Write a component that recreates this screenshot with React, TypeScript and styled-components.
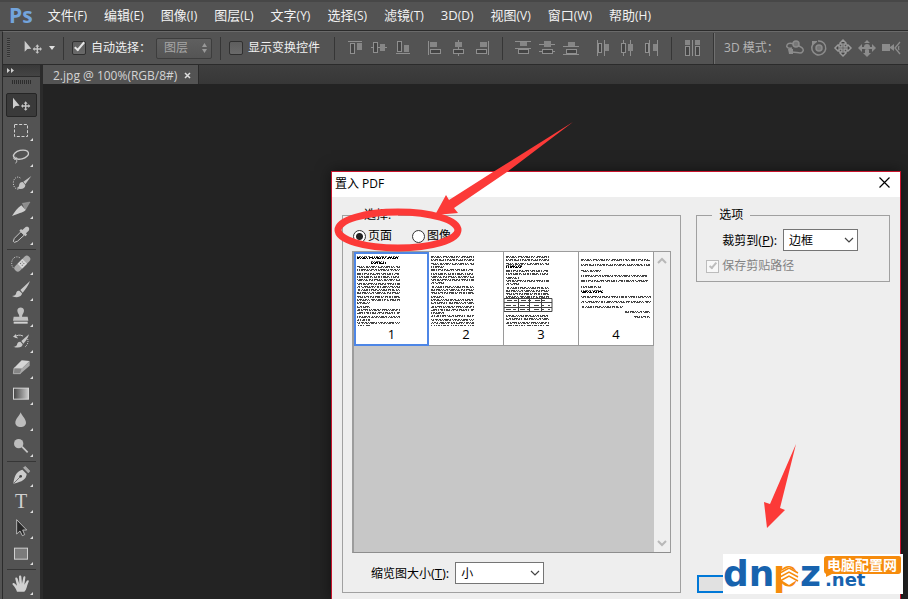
import React from 'react';
import styled, { createGlobalStyle, css } from 'styled-components';

const GlobalStyle = createGlobalStyle`
  *, *::before, *::after { box-sizing: border-box; }
  html, body { margin: 0; padding: 0; overflow: hidden; }
  body, button, input, select {
    font-family: "Open Sans", "Noto Sans CJK SC", sans-serif;
    font-size: 12px;
    line-height: 16px;
  }
  button, select, input { margin: 0; padding: 0; }
  button { border: 0; background: none; color: inherit; display: block; }
`;

const Shell = styled.div`
  position: relative;
  height: 100vh;
  display: flex;
  flex-direction: column;
  overflow: hidden;
  background: #535353;
  color: #e8e8e8;
`;

/* ---------- menu bar ---------- */

const MenuBar = styled.nav`
  display: flex;
  align-items: center;
  flex: none;
  height: 31px;
  padding: 0 0 2px 9px;
  gap: 15px;
  border-top: 2px solid #474747;
  border-bottom: 1px solid #2b2b2b;
  white-space: nowrap;
`;

const Logo = styled.span`
  font-size: 21px;
  line-height: 26px;
  font-weight: 700;
  font-family: "Open Sans", sans-serif;
  color: #73a4dc;
`;

const MenuList = styled.div`
  display: flex;
  gap: 17px;
`;

const MenuItem = styled.button`
  font-size: 13px;
  color: #f2f2f2;
  small { font-size: 12px; }
`;

/* ---------- options bar ---------- */

const OptionsBar = styled.div`
  display: flex;
  align-items: center;
  flex: none;
  height: 34px;
  margin-left: 2px;
  border-left: 1px solid #2b2b2b;
  border-top: 1px solid #6a6a6a;
  border-bottom: 1px solid #2b2b2b;
  white-space: nowrap;
  overflow: hidden;
`;

const Grip = styled.span<{ $wide?: boolean }>`
  flex: none;
  ${p => p.$wide
    ? css`width: 20px; height: 4px; margin: 3px auto 9px;
        background: repeating-linear-gradient(90deg, #2c2c2c 0 1px, #535353 1px 2px);`
    : css`width: 3px; height: 20px; margin-left: 4px;
        background: repeating-linear-gradient(180deg, #333 0 1px, #5b5b5b 1px 2px);`}
`;

const CurrentTool = styled.button`
  display: flex;
  align-items: center;
  margin-left: 14px;
  gap: 6px;
`;

const Divider = styled.span<{ $tall?: boolean }>`
  flex: none;
  width: ${p => (p.$tall ? 2 : 1)}px;
  height: ${p => (p.$tall ? 31 : 23)}px;
  background: #363636;
  border-right: ${p => (p.$tall ? '1px solid #707070' : '0')};
  margin: ${p => (p.$tall ? '0 9px' : '0 8px')};
`;

const CheckLabel = styled.label<{ $muted?: boolean }>`
  display: flex;
  align-items: center;
  gap: 5px;
  color: ${p => (p.$muted ? '#838383' : '#f0f0f0')};
`;

const DarkCheck = styled.input`
  appearance: none;
  position: relative;
  width: 14px;
  height: 14px;
  border: 1px solid #303030;
  border-radius: 2px;
  background: linear-gradient(#5e5e5e, #6a6a6a);
  &:checked::after {
    content: "";
    position: absolute;
    left: 4px;
    top: -2px;
    width: 5px;
    height: 11px;
    border: solid #e6e6e6;
    border-width: 0 2px 2px 0;
    transform: rotate(40deg);
  }
`;

const LayerPicker = styled.div`
  display: grid;
  align-items: center;
  width: 56px;
  height: 21px;
  margin-left: 5px;
  svg { grid-area: 1 / 1; justify-self: end; margin-right: 4px; pointer-events: none; }
`;

const LayerSelect = styled.select`
  grid-area: 1 / 1;
  appearance: none;
  height: 21px;
  padding-left: 7px;
  border: 1px solid #3d3d3d;
  border-radius: 2px;
  background: linear-gradient(#5f5f5f, #555);
  color: #a6a6a6;
  opacity: 1;
`;

const IconGroup = styled.div<{ $gap?: number }>`
  display: flex;
  flex: none;
  margin-left: ${p => p.$gap ?? 0}px;
`;

const IconButton = styled.button`
  width: 24px;
  height: 24px;
  svg { display: block; }
`;

const ModeLabel = styled.span`
  color: #b4b4b4;
  margin-right: 4px;
`;

/* ---------- tool panel and workspace ---------- */

const Main = styled.div`
  display: flex;
  flex: 1;
  min-height: 0;
`;

const ToolPanel = styled.aside`
  display: flex;
  flex-direction: column;
  flex: none;
  width: 41px;
  margin-left: 2px;
  border-left: 1px solid #2b2b2b;
  border-right: 3px solid #2b2b2b;
  background: #535353;
`;

const Collapse = styled.button`
  flex: none;
  height: 12px;
  padding-left: 3px;
  background: linear-gradient(#393939, #444);
  border-bottom: 1px solid #2b2b2b;
  svg { display: block; }
`;

const ToolButton = styled.button<{ $active?: boolean }>`
  flex: none;
  width: 36px;
  height: 26px;
  svg { display: block; }
  ${p => p.$active && css`
    width: 31px;
    height: 24px;
    margin-left: 3px;
    border: 1px solid #252525;
    border-radius: 2px;
    background: #3a3a3a;
  `}
`;

const ToolRule = styled.hr`
  flex: none;
  height: 1px;
  width: 29px;
  margin: 2px 4px 1px;
  border: 0;
  background: #363636;
`;

const Workspace = styled.main`
  display: flex;
  flex-direction: column;
  flex: 1;
  min-width: 0;
  background: #232323;
`;

const TabStrip = styled.div`
  display: flex;
  flex: none;
  height: 19px;
  background: linear-gradient(#3f3f3f, #373737);
`;

const Tab = styled.div`
  display: flex;
  align-items: center;
  gap: 7px;
  padding: 2px 6px 0 10px;
  background: #535353;
  border-right: 1px solid #2a2a2a;
  color: #d4d4d4;
`;

/* ---------- dialog ---------- */

const Dialog = styled.section`
  position: absolute;
  left: 331px;
  right: 7px;
  top: 171px;
  bottom: 0;
  display: flex;
  flex-direction: column;
  border: 1px solid #c8142c;
  border-bottom: 0;
  background: #eee;
  color: #000;
  box-shadow: 0 0 14px rgba(0, 0, 0, 0.5);
`;

const TitleBar = styled.header`
  display: flex;
  align-items: center;
  justify-content: space-between;
  flex: none;
  height: 25px;
  padding: 0 10px 1px 3px;
  background: #fff;
`;

const Title = styled.h1`
  margin: 0;
  font-size: 12px;
  font-weight: 400;
`;

const DialogBody = styled.div`
  flex: 1;
  min-height: 0;
  display: grid;
  grid-template-columns: minmax(0, 7fr) minmax(0, 4fr);
  gap: 15px;
  padding: 10px 10px 6px;
`;

const Group = styled.fieldset<{ $fill?: boolean }>`
  display: flex;
  flex-direction: column;
  min-width: 0;
  margin: 0;
  border: 1px solid #a0a0a0;
  padding: ${p => (p.$fill ? '5px 9px 8px' : '6px 9px 7px')};
`;

const Legend = styled.legend<{ $indent: number }>`
  height: 16px;
  margin-left: ${p => p.$indent}px;
  padding: 0 7px;
`;

const RadioRow = styled.div`
  display: flex;
  gap: 20px;
  padding-left: 1px;
  padding-bottom: 7px;
`;

const RadioLabel = styled.label`
  display: flex;
  align-items: center;
  gap: 2px;
`;

const Radio = styled.input`
  appearance: none;
  width: 13px;
  height: 13px;
  border: 1px solid #333;
  border-radius: 50%;
  background: #fff;
  &:checked { background: radial-gradient(circle, #222 0 3px, #fff 4px); }
`;

const PageList = styled.div`
  flex: 1;
  min-height: 0;
  display: flex;
  justify-content: space-between;
  border: 1px solid #9c9c9c;
  border-left-width: 2px;
  border-bottom-color: #8d8d8d;
  background: #c7c7c7;
`;

const Pages = styled.div`
  display: flex;
  align-items: flex-start;
`;

const PageButton = styled.button<{ $selected?: boolean }>`
  display: flex;
  flex-direction: column;
  align-items: center;
  width: 75px;
  height: 94px;
  padding-bottom: 4px;
  background: #fff;
  border-right: 1px solid #9a9a9a;
  border-bottom: 1px solid #9a9a9a;
  font-size: 13px;
  svg { flex: none; display: block; }
  ${p => p.$selected && css`
    border: 0;
    box-shadow: inset 0 0 0 2px #4d86e6;
  `}
`;

const ScrollTrack = styled.div`
  display: flex;
  flex-direction: column;
  justify-content: space-between;
  width: 16px;
  background: #efefef;
`;

const ScrollButton = styled.button`
  display: grid;
  place-items: center;
  height: 18px;
`;

const FieldRow = styled.div<{ $indent: number; $top?: number }>`
  display: flex;
  align-items: center;
  gap: 6px;
  padding-left: ${p => p.$indent}px;
  padding-top: ${p => p.$top ?? 0}px;
  span { font-size: 13px; }
`;

const SelectBox = styled.div<{ $width: number }>`
  display: grid;
  align-items: center;
  width: ${p => p.$width}px;
  svg { grid-area: 1 / 1; justify-self: end; margin-right: 4px; pointer-events: none; }
  select {
    grid-area: 1 / 1;
    appearance: none;
    height: 22px;
    padding: 1px 0 0 5px;
    border: 1px solid #757575;
    border-radius: 0;
    background: #fff;
    color: #000;
  }
`;

const LightCheck = styled(DarkCheck)`
  width: 13px;
  height: 13px;
  border: 1px solid #bcbcbc;
  border-radius: 0;
  background: #f8f8f8;
  &:checked::after {
    left: 4px;
    top: 0;
    width: 4px;
    height: 8px;
    border-color: #bdbdbd;
  }
`;

const SideColumn = styled.div`
  display: flex;
  flex-direction: column;
  justify-content: space-between;
`;

const ClipRow = styled(CheckLabel)`
  gap: 3px;
  margin-top: 7px;
`;

const OkButton = styled.button`
  height: 18px;
  margin-left: 1px;
  border: 2px solid #0078d7;
  background: #e1e1e1;
`;

/* ---------- overlays ---------- */

const Marks = styled.svg`
  position: absolute;
  left: 0;
  top: 0;
  pointer-events: none;
`;

const SiteBadge = styled.div`
  position: absolute;
  right: 5px;
  bottom: 5px;
  background: #fff;
  svg { display: block; }
`;

/* ---------- option bar drawings ---------- */

type Box = [number, number, number, number];

const AlignIcon = ({ lines, solid, hollow }: { lines: Box[]; solid: Box[]; hollow: Box[] }) => (
  <svg width="24" height="24" viewBox="0 0 24 24" shapeRendering="crispEdges">
    {lines.map(([x, y, w, h], i) => <rect key={'l' + i} x={x} y={y} width={w} height={h} fill="#8f8f8f" />)}
    {solid.map(([x, y, w, h], i) => <rect key={'s' + i} x={x} y={y} width={w} height={h} fill="#868686" />)}
    {hollow.map(([x, y, w, h], i) => (
      <rect key={'h' + i} x={x + 0.5} y={y + 0.5} width={w - 1} height={h - 1} fill="#444" stroke="#8f8f8f" />
    ))}
  </svg>
);

const alignGroups: { gap: number; icons: { name: string; lines: Box[]; solid: Box[]; hollow: Box[] }[] }[] = [
  { gap: 0, icons: [
    { name: '顶对齐', lines: [[5, 5, 14, 1]], solid: [[14, 7, 5, 7]], hollow: [[7, 7, 5, 11]] },
    { name: '垂直居中对齐', lines: [[4, 11, 16, 1]], solid: [[13, 8, 5, 7]], hollow: [[6, 6, 5, 11]] },
    { name: '底对齐', lines: [[5, 17, 14, 1]], solid: [[13, 9, 5, 7]], hollow: [[6, 5, 5, 11]] },
  ] },
  { gap: 7, icons: [
    { name: '左对齐', lines: [[6, 5, 1, 14]], solid: [[8, 6, 7, 5]], hollow: [[8, 13, 11, 5]] },
    { name: '水平居中对齐', lines: [[12, 4, 1, 16]], solid: [[9, 6, 7, 5]], hollow: [[7, 13, 11, 5]] },
    { name: '右对齐', lines: [[18, 5, 1, 14]], solid: [[10, 6, 7, 5]], hollow: [[6, 13, 11, 5]] },
  ] },
];

const distributeGroups: typeof alignGroups = [
  { gap: 0, icons: [
    { name: '按顶分布', lines: [[4, 5, 16, 1], [4, 12, 16, 1]], solid: [[9, 6, 7, 4]], hollow: [[7, 13, 11, 5]] },
    { name: '垂直居中分布', lines: [[4, 8, 16, 1], [4, 15, 16, 1]], solid: [[9, 5, 7, 6]], hollow: [[7, 13, 11, 5]] },
    { name: '按底分布', lines: [[4, 10, 16, 1], [4, 18, 16, 1]], solid: [[9, 6, 7, 4]], hollow: [[7, 13, 11, 5]] },
  ] },
  { gap: 8, icons: [
    { name: '按左分布', lines: [[6, 4, 1, 16], [13, 4, 1, 16]], solid: [[14, 8, 4, 7]], hollow: [[7, 7, 4, 10]] },
    { name: '水平居中分布', lines: [[8, 4, 1, 16], [15, 4, 1, 16]], solid: [[13, 8, 5, 7]], hollow: [[6, 7, 5, 10]] },
    { name: '按右分布', lines: [[10, 4, 1, 16], [18, 4, 1, 16]], solid: [[14, 8, 4, 7]], hollow: [[6, 7, 4, 10]] },
  ] },
];

const moveArrows = 'M12 4 15 7V8H13V11H16V9H17L20 12 17 15H16V13H13V16H15V17L12 20 9 17V16H11V13H8V15H7L4 12 7 9H8V11H11V8H9V7Z';

const modeIcons = [
  { name: '旋转', art: (
    <g stroke="#8c8c8c" fill="none" strokeWidth="1.5">
      <path d="M9 12c-4 1-6-1-5-3s4-2 7-1 8 3 9 5-1 4-3 4-5-1-8-1" />
      <circle cx="13" cy="8" r="3" fill="#777" /><path d="M5 13h5v5H6z" fill="#8c8c8c" strokeWidth="0" />
    </g>) },
  { name: '滚动', art: (
    <g stroke="#8c8c8c" fill="none" strokeWidth="1.5">
      <circle cx="12" cy="12" r="3" fill="#777" /><path d="M6 8a7 7 0 1 0 5-3" /><path d="M5 5h5v1L5 10z" fill="#8c8c8c" strokeWidth="0" />
    </g>) },
  { name: '拖动', art: <path d={moveArrows} fill="#444" stroke="#999" strokeWidth="1.5" /> },
  { name: '滑动', art: (
    <g fill="#8c8c8c">
      <circle cx="12" cy="11" r="3" />
      <path d="M12 4l3 3H9zM3 12l4-4v3h3v2H7v3zM21 12l-4-4v3h-3v2h3v3zM12 21l-4-4h2v-3h4v3h2z" />
    </g>) },
  { name: '缩放', art: (
    <g fill="#8c8c8c">
      <rect x="3" y="8" width="8" height="7" /><path d="M11 11l4-3v7l-4-3z" />
      <path d="M21 6l-5 6 5 6M20 10a4 4 0 0 0 0 4" fill="none" stroke="#8c8c8c" strokeWidth="1.3" />
    </g>) },
];

/* ---------- tool drawings: 3 units per pixel, each with its own origin row ---------- */

const movePaths = (
  <>
    <path d="M39 114V147L47 139L59 138Z" fill="#ccc" />
    <path d="M77 125l6 7h-4v5h6v-4l6 6-6 6v-4h-6v6h4l-6 6-6-6h4v-6h-6v4l-6-6 6-6v4h6v-5h-4z" fill="#c4c4c4" />
  </>
);

const tools: { name: string; y: number; rule?: boolean; art: React.ReactNode }[] = [
  { name: '矩形选框工具', y: 171, art: <rect x="43.5" y="193.5" width="39" height="36" fill="none" stroke="#d2d2d2" strokeWidth="3" strokeDasharray="9 5" /> },
  { name: '套索工具', y: 249, art: (
    <g fill="none" stroke="#cdcdcd" strokeWidth="4">
      <ellipse cx="63" cy="284" rx="23" ry="13" transform="rotate(-14 63 284)" />
      <path d="M46 291c-8 2-5 9 1 7s7-5 0-5M48 299c5 4 1 7-1 11" strokeWidth="3" />
    </g>) },
  { name: '快速选择工具', y: 327, art: (
    <>
      <path d="M61 354c-10-8-21 2-21 15s9 21 18 18" fill="none" stroke="#d2d2d2" strokeWidth="3" strokeDasharray="3 4" />
      <path d="M94 348L70 365l6 8zM68 366c-8 0-10 5-11 11-1 4-4 6-8 7 13 6 27 3 27-9z" fill="#c4c4c4" />
    </>) },
  { name: '切片工具', y: 405, art: (
    <>
      <path d="M67 430l23-4-14 24z" fill="#8c8c8c" stroke="#b5b5b5" strokeWidth="1" />
      <path d="M64 436l13 14c-7 8-25 11-41 18 8-11 16-25 28-32z" fill="#d0d0d0" />
    </>) },
  { name: '吸管工具', y: 483, rule: true, art: (
    <>
      <path d="M63 515l10 10-21 19-9 3-3-3 3-9z" fill="#4b4b4b" stroke="#c8c8c8" strokeWidth="3" />
      <path d="M58 512l5-5 4 3 9-8c8-5 15 3 10 10l-8 8 3 4-5 5z" fill="#c4c4c4" />
    </>) },
  { name: '污点修复画笔工具', y: 573, art: (
    <>
      <path d="M59 593c-12-7-24 2-24 17 0 8 4 14 10 17" fill="none" stroke="#d2d2d2" strokeWidth="3" strokeDasharray="3 4" />
      <g transform="rotate(-45 67 611)">
        <rect x="38" y="601" width="58" height="20" rx="9" fill="#aaa" /><rect x="57" y="601" width="20" height="20" fill="#d8d8d8" />
        <path d="M62 607h3M69 607h3M62 614h3M69 614h3" stroke="#666" strokeWidth="3" />
      </g>
    </>) },
  { name: '画笔工具', y: 651, art: <path d="M90 663L61 690l7 8c9-10 17-22 22-35zM58 692c-8 0-9 5-10 10-2 4-6 6-12 6 15 7 30 3 30-8z" fill="#c8c8c8" /> },
  { name: '仿制图章工具', y: 729, art: (
    <>
      <path d="M58 770c0-8-6-11-6-18 0-13 20-13 20 0 0 7-6 10-6 18h17l2 12H39l2-12z" fill="#c0c0c0" />
      <rect x="41" y="785" width="42" height="6" fill="#d2d2d2" />
    </>) },
  { name: '历史记录画笔工具', y: -3, art: (
    <>
      <path d="M87 13L64 33l6 8c8-8 14-17 17-28zM61 35c-8 0-9 5-10 9-2 4-6 6-11 6 14 6 28 2 28-7z" fill="#c8c8c8" />
      <path d="M69 18c-10-5-18-2-24 2l8 4" fill="none" stroke="#c8c8c8" strokeWidth="3" /><path d="M39 20l9-8 2 13z" fill="#c8c8c8" />
      <path d="M83 27c3 9-1 19-8 24" fill="none" stroke="#c8c8c8" strokeWidth="3" strokeDasharray="3 3" />
    </>) },
  { name: '橡皮擦工具', y: 75, art: (
    <>
      <path d="M42 114l23-23 24 2-22 22z" fill="#d6d6d6" /><path d="M42 114l25 1-6 16H40z" fill="#858585" stroke="#c8c8c8" strokeWidth="2" />
      <path d="M67 115l22-22v14l-28 24z" fill="#aaa" />
    </>) },
  { name: '渐变工具', y: 153, art: (
    <>
      <defs><linearGradient id="toolGradient"><stop stopColor="#444" /><stop offset="1" stopColor="#ccc" /></linearGradient></defs>
      <rect x="40.5" y="174.5" width="45" height="33" fill="url(#toolGradient)" stroke="#d5d5d5" strokeWidth="3" />
    </>) },
  { name: '模糊工具', y: 231, art: <path d="M62 247c3 10 16 20 16 31 0 17-32 17-32 0 0-11 13-21 16-31z" fill="#bdbdbd" /> },
  { name: '减淡工具', y: 309, rule: true, art: (
    <>
      <circle cx="56" cy="341" r="14" fill="#bdbdbd" /><path d="M66 350L83 367" stroke="#c8c8c8" strokeWidth="5" />
    </>) },
  { name: '钢笔工具', y: 396, art: (
    <>
      <path d="M70 410l6-4 14 14-5 6z" fill="#a8a8a8" stroke="#ccc" strokeWidth="1" />
      <path d="M67 416l13 13c-1 16-13 23-40 29 3-26 10-37 27-42z" fill="#ccc" />
      <circle cx="62" cy="436" r="4" fill="#444" /><path d="M61 437L41 457" stroke="#444" strokeWidth="2" />
    </>) },
  { name: '横排文字工具', y: 474, art: (
    <text x="63" y="531" textAnchor="middle" fontFamily="Liberation Serif, serif" fontSize="60" fill="#d0d0d0">T</text>) },
  { name: '路径选择工具', y: 552, art: (
    <path d="M50 566v43l10-9 7 14 7-3-6-14h12z" fill="#292929" stroke="#ccc" strokeWidth="2.5" />) },
  { name: '矩形工具', y: 630, rule: true, art: (
    <rect x="43.5" y="651.5" width="39" height="33" fill="#7b7b7b" stroke="#cfcfcf" strokeWidth="3" />) },
  { name: '抓手工具', y: 717, art: (
    <path d="M51 779c-3-10-8-16-13-21-2-5 3-7 7-3l6 6-5-20c-1-5 5-6 7-1l5 16-1-22c0-5 7-5 7 0l2 21 4-19c1-5 7-4 6 1l-3 21 7-11c3-5 8-2 6 2-5 9-5 23-13 30z" fill="#d0d0d0" />) },
];

const Chevron = ({ up, color = '#444', bold }: { up?: boolean; color?: string; bold?: boolean }) => (
  <svg width="10" height="8" viewBox="0 0 10 8">
    <path d={up ? 'M1 6 5 2 9 6' : 'M1 2 5 6 9 2'} fill="none" stroke={color} strokeWidth={bold ? 2 : 1.2} />
  </svg>
);

/* ---------- page thumbnails ---------- */

type Line = { y: number; x: number; w: number; heavy?: boolean };

const rows = (from: number, count: number, step: number, x: number, w: number, breaks: number[]): Line[] =>
  Array.from({ length: count }, (_, i) => ({
    y: from + Math.round(i * step),
    x,
    w: breaks.includes(i) ? Math.round(w * 0.3) : w,
  }));

const thumbnails: { lines: Line[]; table?: boolean }[] = [
  { lines: [
    { y: 5, x: 2, w: 42, heavy: true }, { y: 10, x: 16, w: 15, heavy: true },
    ...rows(14, 19, 3.3, 2, 43, [11, 12, 16, 18]),
  ] },
  { lines: rows(4, 22, 3.3, 2, 43, [3, 8, 12, 17]) },
  { lines: [
    ...rows(4, 3, 3.3, 2, 43, []), { y: 14, x: 2, w: 16, heavy: true },
    ...rows(18, 9, 3.3, 2, 43, [2, 4]), ...rows(63, 4, 3.3, 2, 43, []),
  ], table: true },
  { lines: [
    ...rows(7, 3, 5.3, 2, 69, [2]), ...rows(23, 3, 5.3, 2, 67, [2]),
    { y: 39, x: 2, w: 22, heavy: true }, ...rows(44, 2, 5.3, 2, 70, []),
    { y: 54, x: 2, w: 42 }, { y: 59, x: 46, w: 25 }, { y: 64, x: 55, w: 16 },
  ] },
];

const dashes = [
  '3 1 1 1 2 1 1 2 4 1 1 1',
  '1 1 2 1 1 1 3 1 2 2 1 1',
  '2 1 1 1 4 1 1 1 1 2',
  '1 1 1 1 3 1 2 1 1 1 5 1',
];

const Thumbnail = ({ lines, table }: { lines: Line[]; table?: boolean }) => (
  <svg width="74" height="74" viewBox="0 0 74 74">
    {lines.map((l, i) => (
      <g key={i} stroke="#000" fill="none">
        <path d={`M${l.x} ${l.y}.5h${l.w}`} opacity={l.heavy ? 1 : 0.75} strokeDasharray={dashes[i % 4]} strokeDashoffset={i * 3} />
        <path d={`M${l.x} ${l.y + 1}.5h${l.w}`} opacity={l.heavy ? 1 : 0.7} strokeDasharray={dashes[(i + 2) % 4]} strokeDashoffset={i * 5} />
        {l.heavy && <path d={`M${l.x} ${l.y - 1}.5h${l.w}`} opacity="0.6" strokeDasharray={dashes[(i + 1) % 4]} />}
      </g>
    ))}
    {table && (
      <g fill="none" stroke="#444">
        <path d="M0 46.5h48v13H0zM0 50.5h48M0 55.5h48M14.5 47v12M25.5 47v12M37.5 47v12" />
        <path d="M3 48.5h42M2 53.5h44M2 57.5h44" strokeDasharray="5 2 3 4" />
      </g>
    )}
  </svg>
);

const menus: [string, string][] = [
  ['文件', 'F'], ['编辑', 'E'], ['图像', 'I'], ['图层', 'L'], ['文字', 'Y'], ['选择', 'S'],
  ['滤镜', 'T'], ['3D', 'D'], ['视图', 'V'], ['窗口', 'W'], ['帮助', 'H'],
];

const renderGroups = (groups: typeof alignGroups) => groups.map((g, i) => (
  <IconGroup key={i} $gap={g.gap}>
    {g.icons.map(({ name, ...art }) => (
      <IconButton key={name} aria-label={name}><AlignIcon {...art} /></IconButton>
    ))}
  </IconGroup>
));

export default function App() {
  return (
    <Shell>
      <GlobalStyle />
      <MenuBar>
        <Logo>Ps</Logo>
        <MenuList>
          {menus.map(([name, key]) => <MenuItem key={key + name}>{name}<small>({key})</small></MenuItem>)}
        </MenuList>
      </MenuBar>

      <OptionsBar>
        <Grip />
        <CurrentTool aria-label="移动工具">
          <svg width="19" height="16" viewBox="37 112 57 48">{movePaths}</svg>
          <svg width="6" height="4" viewBox="0 0 6 4"><path d="M0 0h6L3 4z" fill="#e0e0e0" /></svg>
        </CurrentTool>
        <Divider />
        <CheckLabel><DarkCheck type="checkbox" defaultChecked />自动选择：</CheckLabel>
        <LayerPicker>
          <LayerSelect aria-label="自动选择" disabled><option>图层</option></LayerSelect>
          <svg width="7" height="10" viewBox="0 0 7 10"><path d="M3.5 0 6 4H1zM3.5 10 1 6h5z" fill="#999" /></svg>
        </LayerPicker>
        <Divider />
        <CheckLabel><DarkCheck type="checkbox" />显示变换控件</CheckLabel>
        <IconGroup $gap={6}><Divider /></IconGroup>
        {renderGroups(alignGroups)}
        <Divider />
        {renderGroups(distributeGroups)}
        <Divider />
        <IconButton aria-label="自动对齐图层">
          <AlignIcon
            lines={[[12, 4, 1, 16]]}
            solid={[[5, 4, 5, 5], [15, 4, 5, 5]]}
            hollow={[[5, 10, 5, 10], [15, 10, 5, 10]]}
          />
        </IconButton>
        <Divider $tall />
        <ModeLabel>3D 模式：</ModeLabel>
        {modeIcons.map(m => (
          <IconButton key={m.name} aria-label={m.name}>
            <svg width="24" height="24" viewBox="0 0 24 24">{m.art}</svg>
          </IconButton>
        ))}
      </OptionsBar>

      <Main>
        <ToolPanel>
          <Collapse aria-label="展开面板">
            <svg width="9" height="7" viewBox="0 0 9 7"><path d="M1 1v5l3-2.500zM5 1v5l3-2.500z" fill="#d0d0d0" /></svg>
          </Collapse>
          <Grip $wide />
          <ToolButton $active aria-label="移动工具">
            <svg width="29" height="22" viewBox="21 103 87 66">{movePaths}</svg>
          </ToolButton>
          {tools.map(t => (
            <React.Fragment key={t.name}>
              <ToolButton aria-label={t.name}>
                <svg width="36" height="26" viewBox={`9 ${t.y} 108 78`}>
                  {t.art}
                  <path d={`M99 ${t.y + 63}v9h-9z`} fill="#ddd" />
                </svg>
              </ToolButton>
              {t.rule && <ToolRule />}
            </React.Fragment>
          ))}
        </ToolPanel>
        <Workspace>
          <TabStrip>
            <Tab>
              <span>2.jpg @ 100%(RGB/8#)</span>
              <button aria-label="关闭">
                <svg width="8" height="8" viewBox="0 0 8 8"><path d="M1 1l5 5M6 1 1 6" stroke="#ddd" strokeWidth="1.5" /></svg>
              </button>
            </Tab>
          </TabStrip>
        </Workspace>
      </Main>

      <Dialog role="dialog" aria-labelledby="dialog-title">
        <TitleBar>
          <Title id="dialog-title">置入 PDF</Title>
          <button aria-label="关闭">
            <svg width="11" height="11" viewBox="0 0 11 11"><path d="M.5.5l10 10M10.500.5l-10 10" stroke="#000" strokeWidth="1.2" /></svg>
          </button>
        </TitleBar>
        <DialogBody>
          <Group $fill>
            <Legend $indent={5}>选择:</Legend>
            <RadioRow>
              <RadioLabel><Radio type="radio" name="source" defaultChecked />页面</RadioLabel>
              <RadioLabel><Radio type="radio" name="source" />图像</RadioLabel>
            </RadioRow>
            <PageList>
              <Pages>
                {thumbnails.map((t, i) => (
                  <PageButton key={i} $selected={i === 0}><Thumbnail {...t} />{i + 1}</PageButton>
                ))}
              </Pages>
              <ScrollTrack>
                <ScrollButton aria-label="向上滚动"><Chevron up color="#b8b8b8" bold /></ScrollButton>
                <ScrollButton aria-label="向下滚动"><Chevron color="#b8b8b8" bold /></ScrollButton>
              </ScrollTrack>
            </PageList>
            <FieldRow $indent={19} $top={9}>
              <label htmlFor="thumb-size">缩览图大小<span>(<u>T</u>):</span></label>
              <SelectBox $width={89}>
                <select id="thumb-size"><option>小</option></select>
                <Chevron />
              </SelectBox>
            </FieldRow>
          </Group>
          <SideColumn>
            <Group>
              <Legend $indent={6}>选项</Legend>
              <FieldRow $indent={16}>
                <label htmlFor="crop-to">裁剪到<span>(<u>P</u>):</span></label>
                <SelectBox $width={75}>
                  <select id="crop-to"><option>边框</option></select>
                  <Chevron />
                </SelectBox>
              </FieldRow>
              <ClipRow $muted><LightCheck type="checkbox" defaultChecked disabled />保存剪贴路径</ClipRow>
            </Group>
            <OkButton aria-label="确定" />
          </SideColumn>
        </DialogBody>
      </Dialog>

      <SiteBadge>
        <svg width="180" height="40" viewBox="0 0 180 40">
          <g fontFamily="DejaVu Sans, sans-serif" fontWeight="700">
            <text x="0" y="32" fontSize="36" fill="#1763ae">dn</text>
            <text x="50" y="32" fontSize="36" fill="#f68b0c">p</text>
            <text x="77" y="32" fontSize="36" fill="#1763ae">z</text>
            <text x="102" y="32" fontSize="18" fill="#1763ae">.net</text>
          </g>
          <path d="M58 17l8-4 8 5v8l-8 5-8-5z" fill="#fff" />
          <path d="M57 19l9-5 9 5M57 23l9-5 9 5M57 27l9-5 9 5" stroke="#f68b0c" strokeWidth="1.5" fill="none" />
          <path d="M104 2h72q2 0 2 2v13q0 3-3 3h-66l-6 3v-3q-2-1-2-3V5q0-3 3-3z" fill="#f68b0c" />
          <text x="104" y="16" fontFamily="Noto Sans CJK SC, sans-serif" fontWeight="700" fontSize="14" fill="#fff">电脑配置网</text>
        </svg>
      </SiteBadge>

      <Marks width="908" height="599" viewBox="0 0 908 599" fill="#fc3a38">
        <ellipse cx="398" cy="230" rx="60" ry="18" fill="none" stroke="#fc3a38" strokeWidth="7" />
        <path d="M573 122 507 172 454 208 458 213 435 215 446 195 449 200 493 172Z" />
        <path d="M796 444 780 508 785 510 767 528 764 502 770 504Z" />
      </Marks>
    </Shell>
  );
}
